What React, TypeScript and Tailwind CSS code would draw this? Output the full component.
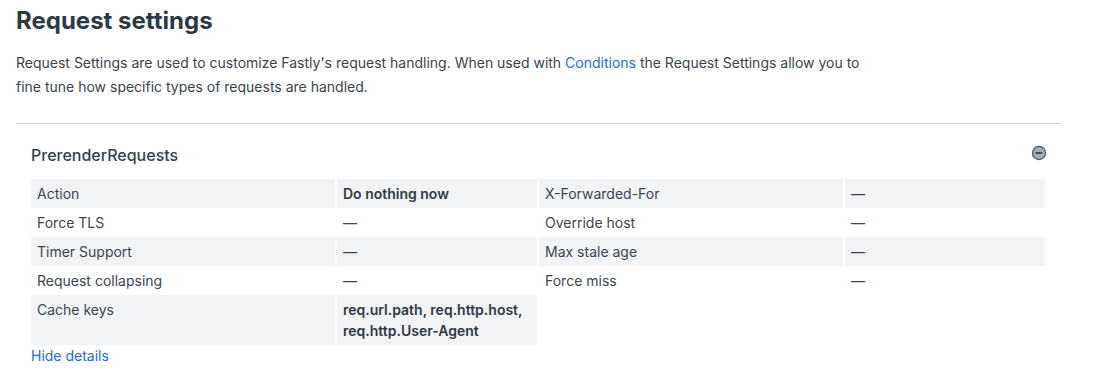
import React from "react";

const rows: { l1: string; v1: string[]; l2?: string; v2?: string; bold?: boolean }[] = [
  { l1: "Action", v1: ["Do nothing now"], l2: "X-Forwarded-For", v2: "—", bold: true },
  { l1: "Force TLS", v1: ["—"], l2: "Override host", v2: "—" },
  { l1: "Timer Support", v1: ["—"], l2: "Max stale age", v2: "—" },
  { l1: "Request collapsing", v1: ["—"], l2: "Force miss", v2: "—" },
  { l1: "Cache keys", v1: ["req.url.path, req.http.host,", "req.http.User-Agent"], bold: true },
];

function MinusIcon() {
  return (
    <svg width="16" height="16" viewBox="0 0 16 16">
      <circle cx="8" cy="8" r="6.6" fill="#a2acb7" stroke="#4b5661" strokeWidth="1.2" />
      <line x1="4.6" y1="8" x2="11.4" y2="8" stroke="#2f3943" strokeWidth="1.6" />
    </svg>
  );
}

export default function App() {
  return (
    <div className="bg-white min-h-[375px] pl-4 text-[#36414c]" style={{ fontFamily: "Inter, 'Noto Sans', sans-serif" }}>
      <div className="w-[1045px]">
        <h1 className="pt-[5px] text-[24px] leading-[32px] font-bold text-[#2e3944]">Request settings</h1>
        <p className="mt-[14px] text-[14px] leading-[24px] text-[#3a444e]">
          Request Settings are used to customize Fastly's request handling. When used with{" "}
          <a className="text-[#1a6fd9]">Conditions</a> the Request Settings allow you to
          <br />
          fine tune how specific types of requests are handled.
        </p>
        <div className="mt-[24px] border-t border-[#cfd3d7]" />
        <div className="pl-[15px] pt-[19px]">
          <div className="flex items-center justify-between pr-[14px]">
            <div className="text-[16px] leading-[24px] font-medium text-[#36414c]">PrerenderRequests</div>
            <div className="-mt-[4px]">
              <MinusIcon />
            </div>
          </div>
          <div className="mt-[12px] grid grid-cols-[304px_200px_304px_200px] gap-x-[2px] text-[14px] leading-[21px] text-[#3c4650]">
            {rows.map((r, i) => {
              const bg = i % 2 === 0 ? "bg-[#f2f3f5]" : "bg-white";
              return (
                <React.Fragment key={i}>
                  <div className={`${bg} px-[6px] py-[4px]`}>{r.l1}</div>
                  <div className={`${bg} px-[6px] py-[4px] ${r.bold ? "font-semibold text-[#303a44]" : ""}`}>
                    {r.v1.map((t, j) => (
                      <div key={j}>{t}</div>
                    ))}
                  </div>
                  <div className={`${r.l2 ? bg : "bg-white"} px-[6px] py-[4px]`}>{r.l2 ?? ""}</div>
                  <div className={`${r.l2 ? bg : "bg-white"} px-[6px] py-[4px]`}>{r.v2 ?? ""}</div>
                </React.Fragment>
              );
            })}
          </div>
          <a className="block text-[14px] leading-[21px] text-[#1a6fd9]">Hide details</a>
        </div>
      </div>
    </div>
  );
}
